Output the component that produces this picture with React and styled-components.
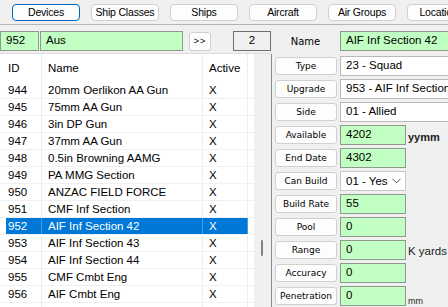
import styled, { createGlobalStyle } from "styled-components";

const Global = createGlobalStyle`
  html, body {
    margin: 0;
    padding: 0;
    background: #f0f0f0;
    overflow: hidden;
  }
  body {
    font-family: "Liberation Sans", Arial, sans-serif;
    font-size: 11px;
    color: #000;
  }
`;

const Window = styled.div`
  width: 448px;
  height: 307px;
  overflow: hidden;
  background: #f0f0f0;
`;

const TabBar = styled.div`
  display: flex;
  gap: 11px;
  height: 25px;
  padding: 4px 0 0 12px;
  box-sizing: border-box;
  border-bottom: 1px solid #b4b4b4;
  white-space: nowrap;
`;

const Tab = styled.div`
  flex: 0 0 auto;
  width: 68px;
  height: 17px;
  box-sizing: border-box;
  border: 1px solid ${(p) => (p.$active ? "#0067c0" : "#d0d0d0")};
  border-radius: 4px;
  background: #fdfdfd;
  font-size: 10.5px;
  letter-spacing: -0.2px;
  line-height: 15px;
  text-align: center;
  overflow: hidden;
`;

const Main = styled.div`
  display: flex;
`;

const Left = styled.div`
  width: 271px;
  flex: 0 0 auto;
  display: flex;
  flex-direction: column;
`;

const SearchRow = styled.div`
  display: flex;
  align-items: center;
  height: 20px;
  margin-top: 6px;
`;

const Field = styled.div`
  box-sizing: border-box;
  height: ${(p) => p.$h || 20}px;
  width: ${(p) => p.$w}px;
  flex: 0 0 auto;
  margin-left: ${(p) => p.$ml || 0}px;
  border: 1px solid ${(p) => (p.$green ? "#8f9a8f" : "#b9b9b9")};
  background: ${(p) => (p.$green ? "#c2ffc2" : "#fff")};
  padding: 0 5px;
  line-height: 17px;
  font-size: 11.5px;
  white-space: nowrap;
  overflow: hidden;
  text-align: ${(p) => p.$align || "left"};
`;

const CountBox = styled(Field)`
  background: #f0f0f0;
  border-color: #6f6f6f;
`;

const SmallButton = styled.div`
  box-sizing: border-box;
  width: 22px;
  height: 19px;
  margin-left: 6px;
  border: 1px solid #d0d0d0;
  border-radius: 3px;
  background: #fdfdfd;
  font-size: 9px;
  line-height: 17px;
  text-align: center;
  letter-spacing: 1px;
`;

const List = styled.div`
  margin-top: 2px;
  border-top: 1px solid #dcdcdc;
  background: #fff;
  display: flex;
  height: 254px;
`;

const Grid = styled.div`
  width: 254px;
  flex: 0 0 auto;
`;

const Cols = "6px 36px 161px 45px 6px";

const Header = styled.div`
  display: grid;
  grid-template-columns: ${Cols};
  height: 28px;
  line-height: 28px;
  font-size: 11.5px;
`;

const Row = styled.div`
  display: grid;
  grid-template-columns: ${Cols};
  height: 17px;
  line-height: 16px;
  font-size: 11.5px;
  border-bottom: 1px solid #f0f0f0;
  box-sizing: border-box;
  color: ${(p) => (p.$sel ? "#fff" : "#000")};
`;

const Cell = styled.div`
  white-space: nowrap;
  overflow: hidden;
  border-right: 1px solid ${(p) => (p.$sel ? "#4a9ae0" : "#ececec")};
  background: ${(p) => (p.$sel ? "#0078d7" : "transparent")};
  padding-left: ${(p) => p.$pl ?? 6}px;
`;

const Gutter = styled.div``;

const Track = styled.div`
  width: 17px;
  background: #f0f0f0;
  position: relative;
`;

const Thumb = styled.div`
  position: absolute;
  left: 7px;
  top: 186px;
  width: 2px;
  height: 16px;
  border-radius: 1px;
  background: #858585;
`;

const Right = styled.div`
  flex: 1;
  display: flex;
  flex-direction: column;
`;

const NameRow = styled.div`
  display: flex;
  align-items: center;
  margin-top: 6px;
  height: 20px;
`;

const NameLabel = styled.div`
  width: 69px;
  text-align: center;
  font-family: "DejaVu Sans", sans-serif;
  font-size: 10px;
`;

const Panel = styled.div`
  margin-top: 3px;
  border-left: 1px solid #8a8a8a;
  padding: 2px 0 0 3px;
  display: flex;
  flex-direction: column;
  gap: 3px;
  height: 260px;
`;

const PropRow = styled.div`
  display: flex;
  align-items: center;
  height: 20px;
`;

const PropButton = styled.div`
  box-sizing: border-box;
  width: 62px;
  height: 18px;
  flex: 0 0 auto;
  border: 1px solid #d0d0d0;
  border-radius: 3px;
  background: #fdfdfd;
  font-family: "DejaVu Sans", sans-serif;
  font-size: 9px;
  line-height: 16px;
  text-align: center;
  margin-right: 3px;
`;

const Select = styled(Field)`
  display: flex;
  justify-content: space-between;
  align-items: center;
  border-color: #c8c8c8;
  padding-right: 4px;
`;

const Suffix = styled.div`
  margin-left: 2px;
  font-size: ${(p) => p.$size || 11}px;
  font-weight: ${(p) => (p.$bold ? 700 : 400)};
  align-self: ${(p) => (p.$low ? "flex-end" : "center")};
  margin-top: ${(p) => p.$dy || 0}px;
  color: #222;
`;

const tabs = ["Devices", "Ship Classes", "Ships", "Aircraft", "Air Groups", "Locations"];

const rows = [
  ["944", "20mm Oerlikon AA Gun"],
  ["945", "75mm AA Gun"],
  ["946", "3in DP Gun"],
  ["947", "37mm AA Gun"],
  ["948", "0.5in Browning AAMG"],
  ["949", "PA MMG Section"],
  ["950", "ANZAC FIELD FORCE"],
  ["951", "CMF Inf Section"],
  ["952", "AIF Inf Section 42"],
  ["953", "AIF Inf Section 43"],
  ["954", "AIF Inf Section 44"],
  ["955", "CMF Cmbt Eng"],
  ["956", "AIF Cmbt Eng"],
  ["957", "AIF Mortar Section"],
];

const Chevron = () => (
  <svg width="9" height="6" viewBox="0 0 9 6">
    <path d="M0.5 0.8 L4.5 4.8 L8.5 0.8" fill="none" stroke="#555" strokeWidth="1" />
  </svg>
);

export default function App() {
  return (
    <Window>
      <Global />
      <TabBar>
        {tabs.map((t, i) => (
          <Tab key={t} $active={i === 0}>{t}</Tab>
        ))}
      </TabBar>
      <Main>
        <Left>
          <SearchRow>
            <Field $green $w={39}>952</Field>
            <Field $green $w={143} $ml={1}>Aus</Field>
            <SmallButton>&gt;&gt;</SmallButton>
            <CountBox $w={38} $ml={22} $align="center">2</CountBox>
          </SearchRow>
          <List>
            <Grid>
              <Header>
                <Gutter />
                <Cell $pl={2}>ID</Cell>
                <Cell>Name</Cell>
                <Cell>Active</Cell>
                <Gutter />
              </Header>
              {rows.map(([id, name]) => {
                const sel = id === "952";
                return (
                  <Row key={id} $sel={sel}>
                    <Gutter />
                    <Cell $sel={sel} $pl={2}>{id}</Cell>
                    <Cell $sel={sel}>{name}</Cell>
                    <Cell $sel={sel}>X</Cell>
                    <Gutter />
                  </Row>
                );
              })}
            </Grid>
            <Track>
              <Thumb />
            </Track>
          </List>
        </Left>
        <Right>
          <NameRow>
            <NameLabel>Name</NameLabel>
            <Field $green $w={130}>AIF Inf Section 42</Field>
          </NameRow>
          <Panel>
            <PropRow>
              <PropButton>Type</PropButton>
              <Field $w={150}>23 - Squad</Field>
            </PropRow>
            <PropRow>
              <PropButton>Upgrade</PropButton>
              <Field $w={150}>953 - AIF Inf Section 43</Field>
            </PropRow>
            <PropRow>
              <PropButton>Side</PropButton>
              <Field $w={150}>01 - Allied</Field>
            </PropRow>
            <PropRow>
              <PropButton>Available</PropButton>
              <Field $green $w={66}>4202</Field>
              <Suffix $bold $dy={4}>yymm</Suffix>
            </PropRow>
            <PropRow>
              <PropButton>End Date</PropButton>
              <Field $green $w={66}>4302</Field>
            </PropRow>
            <PropRow>
              <PropButton>Can Build</PropButton>
              <Select $w={66}>
                <span>01 - Yes</span>
                <Chevron />
              </Select>
            </PropRow>
            <PropRow>
              <PropButton>Build Rate</PropButton>
              <Field $green $w={66}>55</Field>
            </PropRow>
            <PropRow>
              <PropButton>Pool</PropButton>
              <Field $green $w={66}>0</Field>
            </PropRow>
            <PropRow>
              <PropButton>Range</PropButton>
              <Field $green $w={66}>0</Field>
              <Suffix $size={11.5} $dy={2}>K yards</Suffix>
            </PropRow>
            <PropRow>
              <PropButton>Accuracy</PropButton>
              <Field $green $w={66}>0</Field>
            </PropRow>
            <PropRow>
              <PropButton>Penetration</PropButton>
              <Field $green $w={66}>0</Field>
              <Suffix $size={9} $low>mm</Suffix>
            </PropRow>
          </Panel>
        </Right>
      </Main>
    </Window>
  );
}
